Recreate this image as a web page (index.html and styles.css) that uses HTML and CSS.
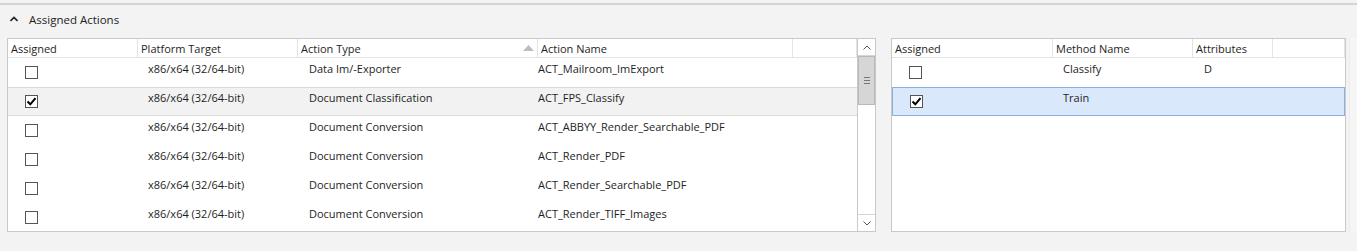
FILE: index.html
```html
<!DOCTYPE html>
<html lang="en">
<head>
    <meta charset="UTF-8">
    <title>Assigned Actions</title>
    <link rel="stylesheet" href="styles.css">
</head>
<body>

    <!-- Expander header -->
    <div class="expander">
        <span class="chevron">
            <svg width="8" height="6" viewBox="0 0 8 6"><path d="M0.5 5 L4 1.5 L7.5 5" fill="none" stroke="#222" stroke-width="1.6"/></svg>
        </span>
        <span class="expander-title">Assigned Actions</span>
    </div>

    <div class="panels">

        <!-- Actions grid -->
        <div class="grid grid-actions">
            <div class="grid-body">
                <table class="table">
                    <colgroup>
                        <col style="width:130px">
                        <col style="width:160px">
                        <col style="width:240px">
                        <col style="width:255px">
                        <col>
                    </colgroup>
                    <thead>
                        <tr>
                            <th>Assigned</th>
                            <th>Platform Target</th>
                            <th class="sorted">Action Type
                                <svg class="sort" width="11" height="6" viewBox="0 0 11 6"><path d="M0 6 L5.5 0 L11 6 Z" fill="#bdbdbd"/></svg>
                            </th>
                            <th>Action Name</th>
                            <th></th>
                        </tr>
                    </thead>
                    <tbody>
                        <tr>
                            <td class="check"><span class="box"></span></td>
                            <td class="platform">x86/x64 (32/64-bit)</td>
                            <td class="type">Data Im/-Exporter</td>
                            <td class="name">ACT_Mailroom_ImExport</td>
                            <td></td>
                        </tr>
                        <tr class="current">
                            <td class="check"><span class="box checked"><svg width="11" height="11" viewBox="0 0 11 11"><path d="M1.5 5.5 L4.3 8.3 L9.5 2.2" fill="none" stroke="#000" stroke-width="2"/></svg></span></td>
                            <td class="platform">x86/x64 (32/64-bit)</td>
                            <td class="type">Document Classification</td>
                            <td class="name">ACT_FPS_Classify</td>
                            <td></td>
                        </tr>
                        <tr>
                            <td class="check"><span class="box"></span></td>
                            <td class="platform">x86/x64 (32/64-bit)</td>
                            <td class="type">Document Conversion</td>
                            <td class="name">ACT_ABBYY_Render_Searchable_PDF</td>
                            <td></td>
                        </tr>
                        <tr>
                            <td class="check"><span class="box"></span></td>
                            <td class="platform">x86/x64 (32/64-bit)</td>
                            <td class="type">Document Conversion</td>
                            <td class="name">ACT_Render_PDF</td>
                            <td></td>
                        </tr>
                        <tr>
                            <td class="check"><span class="box"></span></td>
                            <td class="platform">x86/x64 (32/64-bit)</td>
                            <td class="type">Document Conversion</td>
                            <td class="name">ACT_Render_Searchable_PDF</td>
                            <td></td>
                        </tr>
                        <tr>
                            <td class="check"><span class="box"></span></td>
                            <td class="platform">x86/x64 (32/64-bit)</td>
                            <td class="type">Document Conversion</td>
                            <td class="name">ACT_Render_TIFF_Images</td>
                            <td></td>
                        </tr>
                    </tbody>
                </table>
            </div>

            <!-- Vertical scrollbar -->
            <div class="scrollbar">
                <div class="arrow">
                    <svg width="8" height="5" viewBox="0 0 8 5"><path d="M0.5 4.5 L4 1 L7.5 4.5" fill="none" stroke="#555" stroke-width="1"/></svg>
                </div>
                <div class="thumb"><span class="grip"></span></div>
                <div class="track"></div>
                <div class="arrow">
                    <svg width="8" height="5" viewBox="0 0 8 5"><path d="M0.5 0.5 L4 4 L7.5 0.5" fill="none" stroke="#555" stroke-width="1"/></svg>
                </div>
            </div>
        </div>

        <!-- Methods grid -->
        <div class="grid grid-methods">
            <div class="grid-body">
                <table class="table">
                    <colgroup>
                        <col style="width:161px">
                        <col style="width:140px">
                        <col style="width:80px">
                        <col>
                    </colgroup>
                    <thead>
                        <tr>
                            <th>Assigned</th>
                            <th>Method Name</th>
                            <th>Attributes</th>
                            <th></th>
                        </tr>
                    </thead>
                    <tbody>
                        <tr>
                            <td class="check"><span class="box"></span></td>
                            <td class="method">Classify</td>
                            <td class="attr">D</td>
                            <td></td>
                        </tr>
                        <tr class="selected">
                            <td class="check"><span class="box checked"><svg width="11" height="11" viewBox="0 0 11 11"><path d="M1.5 5.5 L4.3 8.3 L9.5 2.2" fill="none" stroke="#000" stroke-width="2"/></svg></span></td>
                            <td class="method">Train</td>
                            <td class="attr"></td>
                            <td></td>
                        </tr>
                    </tbody>
                </table>
            </div>
        </div>

        <div class="splitter"></div>
    </div>

</body>
</html>
```

FILE: styles.css
```css
/* Page */
body {
    margin: 0;
    background-color: #f3f3f3;
    font-family: "Open Sans", "Noto Sans", sans-serif;
    font-size: 11px;
    color: #1e1e1e;
    height: 251px;
    overflow: hidden;
}

/* Expander header */
.expander {
    margin-top: 3px;
    border-top: 2px solid #d4d4d4;
    height: 31px;
    display: flex;
    align-items: center;
    padding-left: 10px;
    box-sizing: border-box;
}

.chevron {
    display: flex;
    width: 19px;
    margin-top: -1px;
}

.expander-title {
    font-size: 11.5px;
    color: #222;
}

/* Panels row */
.panels {
    display: flex;
    padding-left: 7px;
    margin-top: 4px;
    gap: 15px;
}

.grid {
    flex-shrink: 0;
    height: 194px;
    background-color: #fff;
    border: 1px solid #c9c9c9;
    box-sizing: border-box;
    display: flex;
    overflow: hidden;
}

.grid-actions {
    width: 869px;
}

.grid-methods {
    width: 455px;
}

.grid-body {
    flex: 1;
    overflow: hidden;
}

/* Tables */
.table {
    width: 100%;
    border-collapse: separate;
    border-spacing: 0;
    table-layout: fixed;
}

.table th {
    height: 18px;
    padding: 0 3px;
    text-align: left;
    font-weight: normal;
    color: #1e1e1e;
    border-right: 1px solid #e3e3e3;
    border-bottom: 1px solid #e3e3e3;
    white-space: nowrap;
    overflow: hidden;
}

.table th.sorted {
    position: relative;
}

.sort {
    position: absolute;
    right: 3px;
    top: 6px;
}

.table td {
    height: 27px;
    padding: 0;
    vertical-align: top;
    border-top: 1px solid transparent;
    border-bottom: 1px solid transparent;
    white-space: nowrap;
    overflow: hidden;
    line-height: 20px;
}

.table td.platform {
    padding-left: 10px;
}

.table td.type {
    padding-left: 11px;
}

.table td.name {
    padding-left: 0;
}

.table td.method {
    padding-left: 10px;
}

.table td.attr {
    padding-left: 11px;
}

.table td.check {
    padding-left: 17px;
}

tr.current td {
    background-color: #f2f2f2;
    border-top-color: #dadada;
    border-bottom-color: #dadada;
}

tr.selected td {
    background-color: #dae8fc;
    border-top-color: #8cb0de;
    border-bottom-color: #8cb0de;
}

tr.selected td:first-child {
    border-left: 1px solid #8cb0de;
}

tr.selected td:last-child {
    border-right: 1px solid #8cb0de;
}

/* Checkboxes */
.box {
    display: flex;
    align-items: center;
    justify-content: center;
    width: 11px;
    height: 11px;
    margin-top: 7px;
    border: 1px solid #555;
    background-color: #fff;
}

/* Scrollbar */
.scrollbar {
    width: 17px;
    border-left: 1px solid #c9c9c9;
    display: flex;
    flex-direction: column;
    background-color: #fff;
}

.arrow {
    height: 16px;
    display: flex;
    align-items: center;
    justify-content: center;
    border-bottom: 1px solid #d6d6d6;
}

.arrow:last-child {
    border-bottom: none;
    border-top: 1px solid #d6d6d6;
}

.thumb {
    height: 47px;
    background-color: #d6d6d6;
    border: 1px solid #b9b9b9;
    display: flex;
    align-items: center;
    justify-content: center;
}

.grip {
    width: 6px;
    height: 5px;
    border-top: 1px solid #777;
    border-bottom: 1px solid #777;
    position: relative;
}

.grip::after {
    content: "";
    position: absolute;
    left: 0;
    right: 0;
    top: 2px;
    border-top: 1px solid #777;
}

.track {
    flex: 1;
}

/* Partly visible neighbour panel */
.splitter {
    flex-shrink: 0;
    width: 9px;
    height: 194px;
    margin-left: -12px;
    background-color: #f6f6f6;
    border-left: 1px solid #ececec;
}
```
